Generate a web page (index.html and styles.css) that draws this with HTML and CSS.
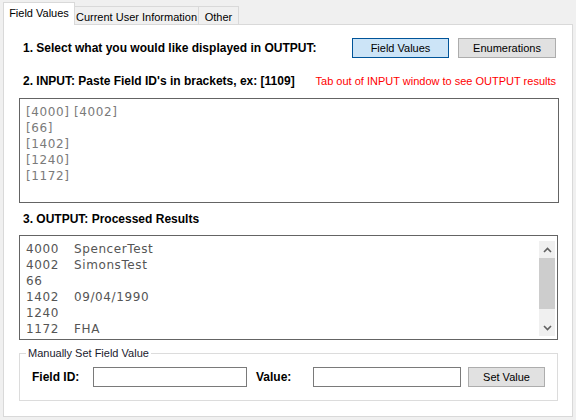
FILE: index.html
```html
<!DOCTYPE html>
<html>
<head>
<meta charset="utf-8">
<link rel="stylesheet" href="styles.css">
</head>
<body>
<div class="window">
  <div class="tabs">
    <div class="tab active">Field Values</div>
    <div class="tab t2">Current User Information</div>
    <div class="tab t3">Other</div>
  </div>
  <div class="panel">
    <div class="row row1">
      <span class="label">1. Select what you would like displayed in OUTPUT:</span>
      <div class="btns">
        <button class="btn primary">Field Values</button>
        <button class="btn">Enumerations</button>
      </div>
    </div>
    <div class="row row2">
      <span class="label">2. INPUT: Paste Field ID's in brackets, ex: [1109]</span>
      <span class="hint">Tab out of INPUT window to see OUTPUT results</span>
    </div>
    <div class="box input-box">
      <div>[4000] [4002]</div>
      <div>[66]</div>
      <div>[1402]</div>
      <div>[1240]</div>
      <div>[1172]</div>
    </div>
    <div class="label row3">3. OUTPUT: Processed Results</div>
    <div class="box output-box">
      <div class="out-text">
        <div class="out-line"><span class="id">4000</span><span>SpencerTest</span></div>
        <div class="out-line"><span class="id">4002</span><span>SimonsTest</span></div>
        <div class="out-line"><span class="id">66</span></div>
        <div class="out-line"><span class="id">1402</span><span>09/04/1990</span></div>
        <div class="out-line"><span class="id">1240</span></div>
        <div class="out-line"><span class="id">1172</span><span>FHA</span></div>
      </div>
      <div class="scrollbar">
        <div class="arrow"><svg width="9" height="6" viewBox="0 0 9 6"><path d="M1 5 L4.5 1.5 L8 5" fill="none" stroke="#606060" stroke-width="1.6"/></svg></div>
        <div class="thumb"></div>
        <div class="track"></div>
        <div class="arrow"><svg width="9" height="6" viewBox="0 0 9 6"><path d="M1 1 L4.5 4.5 L8 1" fill="none" stroke="#606060" stroke-width="1.6"/></svg></div>
      </div>
    </div>
    <fieldset class="group">
      <legend>Manually Set Field Value</legend>
      <div class="field-row">
        <span class="label f-label">Field ID:</span>
        <span class="textbox tb1"></span>
        <span class="label v-label">Value:</span>
        <span class="textbox tb2"></span>
        <button class="btn set-btn">Set Value</button>
      </div>
    </fieldset>
  </div>
</div>
</body>
</html>
```
FILE: styles.css
```css
* { box-sizing: border-box; }
html, body { margin: 0; padding: 0; }
body {
  width: 576px;
  height: 420px;
  background: #f0f0f0;
  font-family: "Liberation Sans", Arial, sans-serif;
  font-size: 11px;
  color: #000;
  overflow: hidden;
}
.window { padding: 2px 0 0 3px; }
.tabs {
  display: flex;
  align-items: flex-end;
  height: 22px;
}
.tab {
  height: 18px;
  border: 1px solid #d9d9d9;
  border-bottom: none;
  border-left: none;
  background: #f0f0f0;
  display: flex;
  align-items: center;
  justify-content: center;
  padding-top: 2px;
  font-size: 11px;
}
.tab.active {
  height: 23px;
  width: 72px;
  margin-bottom: -1px;
  background: #fff;
  border-left: 1px solid #d9d9d9;
  position: relative;
  z-index: 1;
  padding-top: 0;
  padding-bottom: 3px;
}
.tab.t2 { width: 124px; }
.tab.t3 { width: 40px; }
.panel {
  width: 570px;
  height: 393px;
  border: 1px solid #d9d9d9;
  background: #fff;
}
.label { font-weight: bold; font-size: 12px; line-height: 14px; }
.row { display: flex; align-items: center; }
.row1 { margin-top: 13px; height: 20px; padding: 0 16px 0 15px; }
.row1 .label { padding-left: 4px; }
.btns { margin-left: auto; display: flex; gap: 9px; }
.btn {
  height: 20px;
  font-family: "Liberation Sans", Arial, sans-serif;
  font-size: 11px;
  color: #000;
  background: #e1e1e1;
  border: 1px solid #adadad;
  padding: 0;
  margin: 0;
}
.btns .btn { width: 98px; }
.btn.primary { width: 97px; background: #cce4f7; border-color: #005499; }
.row2 { margin-top: 16px; height: 14px; padding: 0 16px 0 19px; }
.hint { margin-left: auto; color: #ff0000; font-size: 11px; }
.box {
  margin: 0 13px 0 15px;
  height: 105px;
  border: 1px solid #646464;
  background: #fff;
  font-family: "DejaVu Sans", Verdana, sans-serif;
  font-size: 12px;
  line-height: 16px;
  letter-spacing: 0.6px;
}
.input-box {
  margin-top: 10px;
  padding: 5px 6px;
  color: #7a7a7a;
}
.row3 { margin-top: 9px; padding-left: 19px; height: 14px; }
.output-box {
  margin-top: 9px;
  margin-right: 14px;
  display: flex;
  color: #555;
}
.out-text { flex: 1; padding: 5px 6px; }
.out-line { display: flex; height: 16px; }
.out-line .id { width: 48px; }
.scrollbar {
  width: 16px;
  margin: 5px 2px 3px 0;
  background: #f0f0f0;
  display: flex;
  flex-direction: column;
}
.arrow {
  height: 17px;
  display: flex;
  align-items: center;
  justify-content: center;
}
.thumb { height: 51px; background: #cdcdcd; }
.track { flex: 1; }
.group {
  margin: 7px 14px 0 15px;
  height: 54px;
  border: 1px solid #dcdcdc;
  padding: 0 6px;
  min-width: 0;
}
.group legend {
  font-size: 11px;
  line-height: 12px;
  padding: 0 2px;
  color: #1a1a2e;
}
.field-row {
  display: flex;
  align-items: center;
  margin-top: 8px;
  padding-left: 6px;
  height: 20px;
}
.f-label { width: 61px; }
.v-label { width: 57px; margin-left: 9px; }
.textbox {
  height: 20px;
  border: 1px solid #7a7a7a;
  background: #fff;
}
.tb1 { width: 154px; }
.tb2 { width: 148px; }
.set-btn { width: 77px; margin-left: 7px; }
```
